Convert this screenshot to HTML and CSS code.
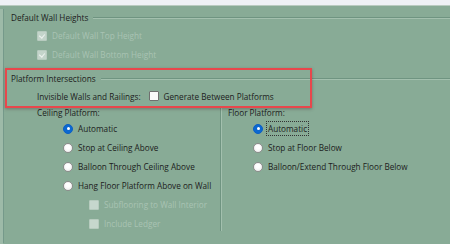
FILE: index.html
```html
<!DOCTYPE html>
<html lang="en">
<head>
  <meta charset="UTF-8">
  <title>Wall Specification</title>
  <link rel="stylesheet" href="styles.css">
</head>
<body>
  <div class="topbar"></div>
  <div class="panel">
    <div class="panel-inner">
      <div class="group-title"><span>Default Wall Heights</span><i class="rule"></i></div>
      <div class="row indent disabled"><span class="check checked"></span>Default Wall Top Height</div>
      <div class="row indent disabled"><span class="check checked"></span>Default Wall Bottom Height</div>

      <div class="group-title second"><span>Platform Intersections</span><i class="rule"></i></div>
      <div class="row indent invisible-row">
        <span class="label">Invisible Walls and Railings:</span>
        <span class="check enabled"></span>Generate Between Platforms
      </div>

      <div class="columns">
        <div class="col col-left">
          <div class="col-label">Ceiling Platform:</div>
          <div class="row radio-row"><span class="radio on"></span>Automatic</div>
          <div class="row radio-row"><span class="radio"></span>Stop at Ceiling Above</div>
          <div class="row radio-row"><span class="radio"></span>Balloon Through Ceiling Above</div>
          <div class="row radio-row"><span class="radio"></span>Hang Floor Platform Above on Wall</div>
          <div class="row sub-row disabled"><span class="check off"></span>Subflooring to Wall Interior</div>
          <div class="row sub-row disabled"><span class="check off"></span>Include Ledger</div>
        </div>
        <div class="col col-right">
          <div class="col-label">Floor Platform:</div>
          <div class="row radio-row"><span class="radio on"></span><span class="focus">Automatic</span></div>
          <div class="row radio-row"><span class="radio"></span>Stop at Floor Below</div>
          <div class="row radio-row"><span class="radio"></span>Balloon/Extend Through Floor Below</div>
        </div>
      </div>
    </div>
    <!-- annotation drawn over the dialog -->
    <div class="highlight"></div>
  </div>
</body>
</html>
```

FILE: styles.css
```css
/* Page */
body {
  margin: 0;
  height: 244px;
  overflow: hidden;
  background: #88ab96;
  font-family: "Open Sans", "Noto Sans", sans-serif;
  font-size: 8.2px;
  color: #1c1c1c;
}

.topbar {
  height: 5px;
  background: #eef1f5;
  border-bottom: 1px solid #b9cbc0;
}

/* Dialog panel */
.panel {
  position: relative;
  border-left: 3px solid #9dbaa8;
  height: 238px;
}

.panel-inner {
  border-left: 1px solid #75998a;
  padding-left: 7px;
  height: 234px;
}

/* Group headers with rule */
.group-title {
  display: flex;
  align-items: center;
  height: 17px;
  margin-top: 3px;
}

.group-title.second {
  margin-top: 6px;
}

.group-title .rule {
  flex: 1;
  height: 0;
  margin-left: 5px;
  border-top: 1px solid #6f9481;
  border-bottom: 1px solid #a3c0ae;
}

/* Rows */
.row {
  display: flex;
  align-items: center;
  height: 19px;
  white-space: nowrap;
}

.indent {
  padding-left: 26px;
}

.invisible-row {
  height: 18px;
}

.invisible-row .label {
  margin-right: 8px;
}

.disabled {
  color: #a9c3b3;
}

/* Checkboxes */
.check {
  width: 8px;
  height: 8px;
  margin-right: 5px;
  border-radius: 1px;
  position: relative;
  flex-shrink: 0;
}

.check.checked {
  background: #c3d4ca;
  border: 1px solid #b7cbbf;
}

.check.checked::after {
  content: "";
  position: absolute;
  left: 2px;
  top: 1px;
  width: 3px;
  height: 4px;
  border-right: 1.3px solid #eef4f0;
  border-bottom: 1.3px solid #eef4f0;
  transform: rotate(40deg);
}

.check.enabled {
  width: 8px;
  height: 8px;
  background: #fafafa;
  border: 1px solid #6f6f6f;
}

.check.off {
  width: 8px;
  height: 8px;
  background: #c6d7cd;
  border: 1px solid #b6cbbe;
}

/* Radio buttons */
.radio {
  width: 8px;
  height: 8px;
  margin-right: 5px;
  border-radius: 50%;
  border: 1px solid #8c8c8c;
  background: radial-gradient(circle at 50% 40%, #ffffff 30%, #e6e6e6 100%);
  flex-shrink: 0;
  position: relative;
}

.radio.on {
  border-color: #0b5fc4;
  background: #0b68d1;
}

.radio.on::after {
  content: "";
  position: absolute;
  left: 2.5px;
  top: 2.5px;
  width: 3px;
  height: 3px;
  border-radius: 50%;
  background: #fff;
}

/* Two platform columns */
.columns {
  display: flex;
  margin-top: 1px;
}

.col-label {
  height: 13px;
  display: flex;
  align-items: center;
}

.col-left {
  width: 183px;
  padding-left: 26px;
  border-right: 1px solid #6f9481;
  box-shadow: 1px 0 0 #a3c0ae;
  height: 125px;
}

.col-left .radio-row {
  padding-left: 26px;
}

.col-left .sub-row {
  padding-left: 52px;
}

.col-right {
  padding-left: 7px;
}

.col-right .radio-row {
  padding-left: 25px;
}

.focus {
  outline: 1px dotted #333;
  outline-offset: 1px;
}

/* Red annotation box */
.highlight {
  position: absolute;
  left: 2px;
  top: 59px;
  width: 303px;
  height: 36px;
  border: 2px solid #e8474c;
  box-shadow: 0 1px 3px rgba(60, 30, 30, 0.35);
  pointer-events: none;
}
```
